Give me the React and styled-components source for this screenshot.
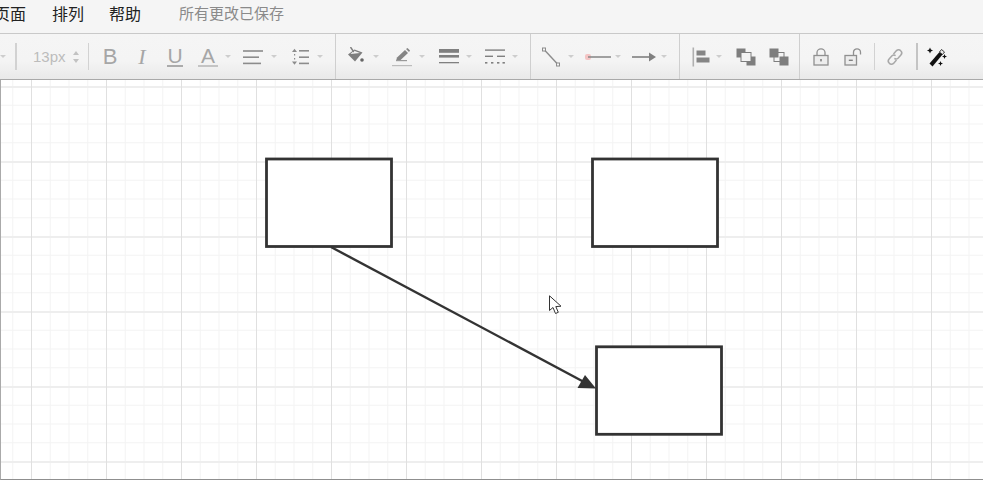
import React from "react";
import styled, { createGlobalStyle } from "styled-components";

const GlobalStyle = createGlobalStyle`
  html, body {
    margin: 0;
    padding: 0;
    background: #fff;
  }
  body {
    font-family: "Liberation Sans", "Noto Sans CJK SC", sans-serif;
  }
`;

const Page = styled.div`
  display: flex;
  flex-direction: column;
  width: 983px;
  height: 480px;
  overflow: hidden;
`;

const MenuBar = styled.div`
  display: flex;
  align-items: center;
  box-sizing: border-box;
  height: 34px;
  padding-bottom: 8px;
  margin-left: -6px;
  background: #f5f5f5;
  border-bottom: 1px solid #c9c9c9;
  font-family: "Noto Sans CJK SC", sans-serif;
  font-size: 16px;
  line-height: 24px;
  color: #222;
`;

const MenuItem = styled.span`
  margin-right: ${(p) => p.$mr || 26}px;
`;

const SaveState = styled.span`
  margin-left: 13px;
  font-size: 15px;
  color: #8a8a8a;
`;

const Toolbar = styled.div`
  display: flex;
  height: 45px;
  background: linear-gradient(#f5f5f5 0%, #f4f4f4 60%, #e9e9e9 100%);
  border-bottom: 1px solid #a9a9a9;
`;

const Group = styled.div`
  display: flex;
  align-items: center;
  box-sizing: border-box;
  width: ${(p) => p.$w}px;
  border-right: ${(p) => (p.$last ? "none" : "1px solid #cfcfcf")};
`;

const Tool = styled.div`
  display: flex;
  align-items: center;
  justify-content: center;
  width: 32px;
  height: 24px;
  margin-left: ${(p) => p.$ml || 0}px;
  color: #8c8c8c;
`;

const Letter = styled.span`
  font-family: ${(p) => (p.$italic ? '"Liberation Serif"' : '"Liberation Sans"')}, serif;
  font-size: ${(p) => p.$size || 22}px;
  font-style: ${(p) => (p.$italic ? "italic" : "normal")};
  line-height: 19px;
  color: #a6a6a6;
  border-bottom: ${(p) => (p.$line ? `${p.$line}` : "none")};
  padding: 0 ${(p) => p.$pad || 0}px;
`;

const Caret = styled.span`
  display: block;
  flex: none;
  width: 0;
  height: 0;
  margin-left: ${(p) => p.$ml ?? 1}px;
  margin-right: 1px;
  border-left: 3.5px solid transparent;
  border-right: 3.5px solid transparent;
  border-top: 3.5px solid #cdcdcd;
`;

const Divider = styled.span`
  flex: none;
  width: ${(p) => p.$wide || 1}px;
  height: 27px;
  margin-left: ${(p) => p.$ml || 0}px;
  background: ${(p) => p.$color || "#d2d2d2"};
`;

const FontSize = styled.span`
  margin-left: 16px;
  width: 34px;
  font-size: 15px;
  color: #bcbcbc;
`;

const Spinner = styled.span`
  display: flex;
  flex-direction: column;
  gap: 4px;
  margin-left: 6px;
  margin-right: 9px;
`;

const SpinArrow = styled.span`
  display: block;
  width: 0;
  height: 0;
  border-left: 3.5px solid transparent;
  border-right: 3.5px solid transparent;
  ${(p) => (p.$up ? "border-bottom" : "border-top")}: 4px solid #c2c2c2;
`;

const Canvas = styled.div`
  position: relative;
  flex: 1;
  box-sizing: border-box;
  border-left: 1px solid #aaa;
  border-bottom: 1px solid #8f8f8f;
  background-color: #fff;
  background-image:
    linear-gradient(to right, #e0e0e0 1px, transparent 1px),
    linear-gradient(to bottom, #eeeeee 2px, transparent 2px),
    linear-gradient(to right, #f3f3f3 1px, transparent 1px),
    linear-gradient(to bottom, #f3f3f3 1px, transparent 1px);
  background-size: 75px 75px, 75px 75px, 18.75px 18.75px, 18.75px 18.75px;
  background-position: 30px 6px, 30px 6px, 11.25px 6px, 11.25px 6px;
`;

const Diagram = styled.svg`
  position: absolute;
  left: -1px;
  top: -80px;
  width: 983px;
  height: 480px;
  pointer-events: none;
`;

const Pointer = styled.svg`
  position: absolute;
  left: 547px;
  top: 215px;
`;

const Shape = ({ x, y }) => (
  <rect x={x} y={y} width="125" height="87.5" fill="#fff" stroke="#333" strokeWidth="2.8" />
);

const AlignIcon = () => (
  <svg width="22" height="16" viewBox="0 0 22 16" fill="#8c8c8c">
    <rect x="1" y="1.2" width="20" height="1.6" />
    <rect x="1" y="7.4" width="16" height="1.6" />
    <rect x="1" y="13.6" width="18" height="1.6" />
  </svg>
);

const LineHeightIcon = () => (
  <svg width="20" height="20" viewBox="0 0 20 20" fill="#8c8c8c">
    <rect x="9" y="3" width="10" height="1.6" />
    <rect x="9" y="9.4" width="10" height="1.6" />
    <rect x="9" y="15.6" width="10" height="1.6" />
    <path d="M2 5 L4.5 1.8 L7 5 Z" />
    <rect x="4" y="7" width="1.2" height="1.5" />
    <rect x="4" y="11" width="1.2" height="1.5" />
    <path d="M2 14.6 L4.5 17.8 L7 14.6 Z" />
  </svg>
);

const PaintIcon = () => (
  <svg width="20" height="20" viewBox="0 2 20 20">
    <path d="M8.5 4.5 L16.5 7.5 L9 16.5 L2 9.5 Z" fill="#7e7e7e" />
    <path d="M4.5 9 L8 5.8 L14 8 Z" fill="#f5f5f5" />
    <path d="M4.5 2 L7.8 7" stroke="#7e7e7e" strokeWidth="1.4" fill="none" />
    <circle cx="16" cy="15" r="1.8" fill="#666" />
  </svg>
);

const PenIcon = () => (
  <svg width="22" height="22" viewBox="0 0 22 22">
    <path d="M5 15 L6 11.5 L14 4 L17 7 L9 14.5 Z" fill="#858585" />
    <path d="M15 3 L16.5 2 L19 4.5 L18 6 Z" fill="#858585" />
    <rect x="5" y="14" width="11" height="1.2" fill="#999" />
    <rect x="1" y="19" width="20" height="1.2" fill="#bcbcbc" />
  </svg>
);

const LineWidthIcon = () => (
  <svg width="22" height="18" viewBox="0 0 22 18">
    <rect x="1" y="1" width="20" height="3.8" fill="#808080" />
    <rect x="1" y="7" width="20" height="2.6" fill="#808080" />
    <rect x="1" y="14" width="20" height="1.3" fill="#808080" />
  </svg>
);

const DashIcon = () => (
  <svg width="22" height="18" viewBox="0 0 22 18" fill="#808080">
    <rect x="1" y="1.4" width="20" height="1.4" />
    <rect x="1" y="7.6" width="8" height="1.4" />
    <rect x="13" y="7.6" width="8" height="1.4" />
    <rect x="1" y="14" width="2.4" height="1.6" />
    <rect x="7" y="14" width="2.4" height="1.6" />
    <rect x="13" y="14" width="2.4" height="1.6" />
    <rect x="18.5" y="14" width="2.4" height="1.6" />
  </svg>
);

const ConnectorIcon = () => (
  <svg width="20" height="20" viewBox="0 0 20 20" fill="none" stroke="#8c8c8c">
    <path d="M3.5 3 L16.5 17" strokeWidth="1.4" />
    <rect x="1.5" y="1" width="3" height="3" fill="#f4f4f4" strokeWidth="1" />
    <rect x="15.5" y="16" width="3" height="3" fill="#f4f4f4" strokeWidth="1" />
  </svg>
);

const StartLineIcon = () => (
  <svg width="28" height="8" viewBox="0 0 28 8">
    <rect x="1" y="1" width="6" height="6" rx="2" fill="#f4c4c4" />
    <rect x="4" y="3.2" width="23" height="1.6" fill="#8c8c8c" />
  </svg>
);

const ArrowLineIcon = () => (
  <svg width="26" height="10" viewBox="0 0 26 10" fill="#808080">
    <rect x="1" y="4.2" width="18" height="1.6" />
    <path d="M18 0.5 L25 5 L18 9.5 Z" />
  </svg>
);

const AlignLeftIcon = () => (
  <svg width="18" height="20" viewBox="0 0 18 20" fill="#858585">
    <rect x="0.5" y="0.5" width="1.6" height="19" fill="#b0b0b0" />
    <rect x="4.5" y="3.5" width="9" height="5" />
    <rect x="4.5" y="10.5" width="13" height="5" />
  </svg>
);

const ToFrontIcon = () => (
  <svg width="20" height="18" viewBox="0 0 20 18">
    <rect x="0.5" y="0.5" width="9" height="9" fill="#7e7e7e" />
    <rect x="10.5" y="8.5" width="9" height="9" fill="#7e7e7e" />
    <rect x="5" y="4.5" width="10" height="9" fill="#f4f4f4" stroke="#7e7e7e" strokeWidth="1" />
  </svg>
);

const ToBackIcon = () => (
  <svg width="20" height="18" viewBox="0 0 20 18">
    <rect x="5" y="4.5" width="10" height="9" fill="#f4f4f4" stroke="#7e7e7e" strokeWidth="1" />
    <rect x="0.5" y="0.5" width="9" height="9" fill="#7e7e7e" />
    <rect x="10.5" y="8.5" width="9" height="9" fill="#7e7e7e" />
  </svg>
);

const LockIcon = () => (
  <svg width="16" height="18" viewBox="0 0 16 18" fill="none" stroke="#909090" strokeWidth="1.3">
    <rect x="1" y="7.5" width="14" height="9.5" fill="#ededed" />
    <path d="M4 7.5 V4.5 a4 3.6 0 0 1 8 0 V7.5" />
    <rect x="7.2" y="11" width="1.6" height="2.4" fill="#808080" stroke="none" />
  </svg>
);

const UnlockIcon = () => (
  <svg width="18" height="18" viewBox="0 0 18 18" fill="none" stroke="#909090" strokeWidth="1.3">
    <rect x="1" y="7.5" width="11.5" height="9.5" fill="#ededed" />
    <path d="M9.5 7.5 V4.3 a3.5 3.5 0 0 1 7 0 V6.5" />
    <rect x="4.8" y="11.6" width="4" height="1.4" fill="#808080" stroke="none" />
  </svg>
);

const LinkIcon = () => (
  <svg width="18" height="18" viewBox="0 0 18 18" fill="none" stroke="#a8a8a8" strokeWidth="1.5">
    <path d="M7.5 6 L10.5 2.6 a2.9 2.9 0 0 1 4.2 0.2 a3 3 0 0 1 0.2 4.2 L12 10.2 a2.8 2.8 0 0 1 -3.6 0.2" />
    <path d="M10.5 12 L7.5 15.4 a2.9 2.9 0 0 1 -4.2 -0.2 a3 3 0 0 1 -0.2 -4.2 L6 7.8 a2.8 2.8 0 0 1 3.6 -0.2" />
  </svg>
);

const MagicIcon = () => (
  <svg width="20" height="20" viewBox="0 0 20 20">
    <path d="M2.5 16.5 L12.5 5 L15.5 7.5 L5.5 19.5 Z" fill="#111" />
    <path d="M12.5 5 L14.5 2.5 L17.5 5 L15.5 7.5 Z" fill="#eaeaea" stroke="#111" strokeWidth="0.8" />
    <path d="M3 0.5 L3.9 2.6 L6 3.5 L3.9 4.4 L3 6.5 L2.1 4.4 L0 3.5 L2.1 2.6 Z" fill="#111" />
    <path d="M17.5 7 L18.2 8.8 L20 9.5 L18.2 10.2 L17.5 12 L16.8 10.2 L15 9.5 L16.8 8.8 Z" fill="#111" />
    <path d="M13.5 14 L14.2 15.8 L16 16.5 L14.2 17.2 L13.5 19 L12.8 17.2 L11 16.5 L12.8 15.8 Z" fill="#111" />
  </svg>
);

const App = () => {
  return (
    <Page>
      <GlobalStyle />
      <MenuBar>
        <MenuItem>页面</MenuItem>
        <MenuItem $mr={25}>排列</MenuItem>
        <MenuItem $mr={25}>帮助</MenuItem>
        <SaveState>所有更改已保存</SaveState>
      </MenuBar>
      <Toolbar>
        <Group $w={336}>
          <Caret $ml={0} />
          <Divider $ml={8} $wide={2} />
          <FontSize>13px</FontSize>
          <Spinner>
            <SpinArrow $up />
            <SpinArrow />
          </Spinner>
          <Divider />
          <Tool $ml={5}><Letter>B</Letter></Tool>
          <Tool><Letter $italic>I</Letter></Tool>
          <Tool $ml={1}><Letter $size={21} $line="2px solid #ababab">U</Letter></Tool>
          <Tool $ml={1}><Letter $size={21} $pad={3} $line="2px solid #c4c4c4">A</Letter></Tool>
          <Caret />
          <Tool $ml={5}><AlignIcon /></Tool>
          <Caret $ml={2} />
          <Tool $ml={6}><LineHeightIcon /></Tool>
          <Caret />
        </Group>
        <Group $w={195}>
          <Tool $ml={4}><PaintIcon /></Tool>
          <Caret />
          <Tool $ml={6}><PenIcon /></Tool>
          <Caret />
          <Tool $ml={7}><LineWidthIcon /></Tool>
          <Caret />
          <Tool $ml={6}><DashIcon /></Tool>
          <Caret />
        </Group>
        <Group $w={149}>
          <Tool $ml={4}><ConnectorIcon /></Tool>
          <Caret />
          <Tool $ml={7}><StartLineIcon /></Tool>
          <Caret />
          <Tool $ml={6}><ArrowLineIcon /></Tool>
          <Caret />
        </Group>
        <Group $w={120}>
          <Tool $ml={5}><AlignLeftIcon /></Tool>
          <Caret $ml={-1} />
          <Tool $ml={7}><ToFrontIcon /></Tool>
          <Tool $ml={1}><ToBackIcon /></Tool>
        </Group>
        <Group $w={183} $last>
          <Tool $ml={5}><LockIcon /></Tool>
          <Tool><UnlockIcon /></Tool>
          <Divider $ml={5} />
          <Tool $ml={4}><LinkIcon /></Tool>
          <Divider $ml={5} $wide={2} $color="#c4c4c4" />
          <Tool $ml={3}><MagicIcon /></Tool>
        </Group>
      </Toolbar>
      <Canvas>
        <Diagram viewBox="0 0 983 480">
          <Shape x={266.5} y={159} />
          <Shape x={592.5} y={159} />
          <Shape x={596.5} y={346.8} />
          <path d="M331 247 L584 382" stroke="#333" strokeWidth="2.4" fill="none" />
          <path d="M596 388.5 L577.5 388 L585 375 Z" fill="#333" />
        </Diagram>
        <Pointer width="16" height="22" viewBox="0 0 16 22">
          <path
            d="M1.5 0.8 L1.5 15.5 L5 12.5 L7.5 18.5 L10.3 17.3 L7.8 11.6 L13 11.2 Z"
            fill="#fff"
            stroke="#333"
            strokeWidth="1"
          />
        </Pointer>
      </Canvas>
    </Page>
  );
};

export default App;
